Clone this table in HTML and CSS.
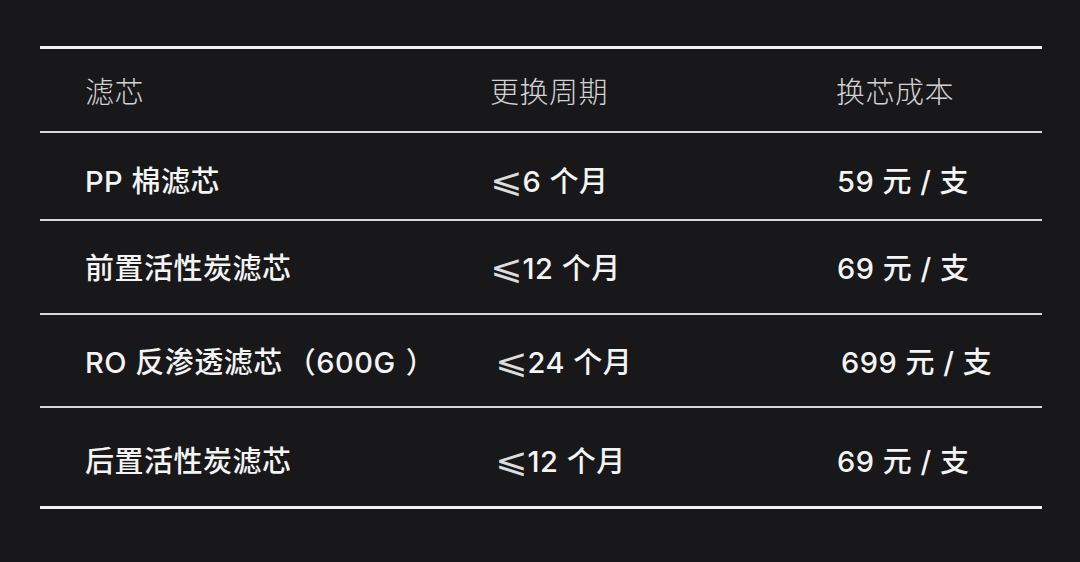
FILE: index.html
```html
<!DOCTYPE html>
<html lang="zh-CN">
<head>
<meta charset="utf-8">
<link rel="stylesheet" href="styles.css">
</head>
<body>
<div class="table">
  <div class="row head">
    <div class="cell">滤芯</div>
    <div class="cell">更换周期</div>
    <div class="cell">换芯成本</div>
  </div>
  <div class="row r1">
    <div class="cell">PP 棉滤芯</div>
    <div class="cell"><span class="le">⩽</span>6 个月</div>
    <div class="cell val">59 元 / 支</div>
  </div>
  <div class="row r2">
    <div class="cell">前置活性炭滤芯</div>
    <div class="cell"><span class="le">⩽</span>12 个月</div>
    <div class="cell val">69 元 / 支</div>
  </div>
  <div class="row r3">
    <div class="cell">RO 反渗透滤芯<span class="paren">（</span>600G<span class="paren close">）</span></div>
    <div class="cell shift"><span class="le">⩽</span>24 个月</div>
    <div class="cell val shift">699 元 / 支</div>
  </div>
  <div class="row r4">
    <div class="cell">后置活性炭滤芯</div>
    <div class="cell shift"><span class="le">⩽</span>12 个月</div>
    <div class="cell val">69 元 / 支</div>
  </div>
</div>
</body>
</html>
```
FILE: styles.css
```css
html, body {
  margin: 0;
  padding: 0;
  background: #18181a;
}
body {
  width: 1080px;
  height: 562px;
  overflow: hidden;
  font-family: "Inter", "Noto Sans CJK SC", "DejaVu Sans", sans-serif;
}
.table {
  margin: 46px 38px 0 40px;
  border-top: 3px solid #f2f2f2;
  border-bottom: 3px solid #f2f2f2;
}
.row {
  display: grid;
  grid-template-columns: 405px 346px 1fr;
  padding-left: 45px;
  align-items: center;
  border-bottom: 2px solid #d8d8d8;
  box-sizing: border-box;
}
.row:last-child {
  border-bottom: none;
}
.cell {
  font-size: 29px;
  letter-spacing: 0.5px;
  line-height: 38px;
  color: #f4f4f4;
  font-weight: 500;
  white-space: nowrap;
}
.head .cell {
  font-weight: 300;
  color: #d2d2d2;
}
.head { height: 84px; padding-top: 6px; }
.r1 { height: 88px; padding-top: 12px; }
.r2 { height: 94px; padding-top: 4px; }
.r3 { height: 93px; padding-top: 4px; }
.r4 { height: 98px; padding-top: 10px; }
.val { padding-left: 1px; }
.shift { padding-left: 5px; }
.paren { margin-left: 4px; }
.paren.close { margin-left: 10px; }
.le {
  display: inline-block;
  font-family: "DejaVu Sans", sans-serif;
  font-weight: 300;
  color: #dcdcdc;
  font-size: 34px;
  line-height: 20px;
  transform: scaleX(1.15);
  transform-origin: left bottom;
  margin-right: 4px;
}
```
